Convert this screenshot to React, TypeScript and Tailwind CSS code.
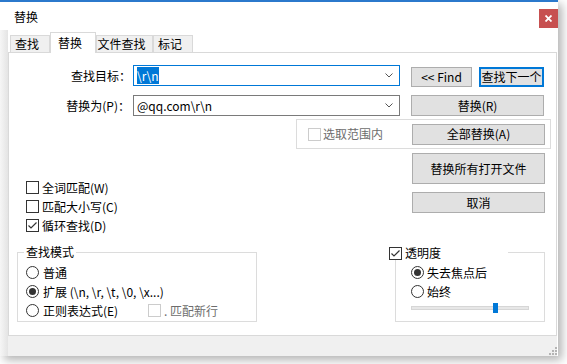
import React from 'react'

const font = "font-['Noto_Sans_CJK_SC','Microsoft_YaHei',sans-serif]"

function CheckBox({ checked = false, disabled = false }: { checked?: boolean; disabled?: boolean }) {
  return (
    <span className={`w-[13px] h-[13px] shrink-0 border bg-white flex items-center justify-center ${disabled ? 'border-[#cccccc]' : 'border-[#333333]'}`}>
      {checked && (
        <svg width="11" height="11" viewBox="0 0 11 11">
          <path d="M1.5 5.5 L4 8 L9.5 2.5" fill="none" stroke="#333333" strokeWidth="1.2" />
        </svg>
      )}
    </span>
  )
}

function Radio({ checked = false }: { checked?: boolean }) {
  return (
    <span className="w-[13px] h-[13px] shrink-0 rounded-full border border-[#333333] bg-white flex items-center justify-center">
      {checked && <span className="w-[7px] h-[7px] rounded-full bg-[#333333]" />}
    </span>
  )
}

function Btn({ children, className = '' }: { children: React.ReactNode; className?: string }) {
  return (
    <div className={`bg-[#e1e1e1] border border-[#adadad] flex items-center justify-center text-[12px] leading-[14px] text-black ${className}`}>
      {children}
    </div>
  )
}

function Combo({ focused, children }: { focused?: boolean; children: React.ReactNode }) {
  return (
    <div className={`w-[267px] h-[21px] bg-white border flex items-center pl-[3px] pr-[6px] ${focused ? 'border-[#0078d7]' : 'border-[#7a7a7a]'}`}>
      <div className="flex-1 text-[12px] leading-[15px] text-black">{children}</div>
      <svg width="8" height="5" viewBox="0 0 8 5">
        <path d="M0.5 0.5 L4 4 L7.5 0.5" fill="none" stroke="#555555" strokeWidth="1" />
      </svg>
    </div>
  )
}

export default function App() {
  const tabs = [
    { label: '查找', w: 'w-[40px]' },
    { label: '替换', w: 'w-[46px]', active: true },
    { label: '文件查找', w: 'w-[57px]' },
    { label: '标记', w: 'w-[40px]' },
  ]

  return (
    <div className={`w-[567px] h-[364px] bg-white ${font}`}>
      <div className="w-[558px] h-[356px] flex flex-col bg-white border-t-2 border-[#2b79cc] shadow-[4px_4px_9px_rgba(0,0,0,0.3)]">
        {/* title bar */}
        <div className="h-[28px] flex items-start justify-between">
          <span className="ml-[14px] mt-[8px] text-[12px] leading-[14px] text-black">替换</span>
          <div className="mt-[7px] w-[19px] h-[19px] bg-[#c75050] flex items-center justify-center">
            <svg width="7" height="7" viewBox="0 0 7 7">
              <path d="M0.5 0.5 L6.5 6.5 M6.5 0.5 L0.5 6.5" stroke="#ffffff" strokeWidth="1.8" />
            </svg>
          </div>
        </div>

        <div className="flex-1 flex">
          <div className="w-[8px] bg-linear-to-r from-[#f6f6f6] to-[#e4e4e4]" />
          <div className="w-[549px] flex flex-col">
            {/* tabs */}
            <div className="h-[22px] flex items-end pl-[2px]">
              {tabs.map(t =>
                t.active ? (
                  <div key={t.label} className={`${t.w} h-[21px] -mb-px relative z-10 bg-white border border-b-0 border-[#d9d9d9] flex items-center justify-center pr-[6px] text-[12px] leading-[14px]`}>
                    {t.label}
                  </div>
                ) : (
                  <div key={t.label} className={`${t.w} h-[17px] bg-[#f0f0f0] border border-b-0 border-[#d9d9d9] flex items-center justify-center pr-[6px] text-[12px] leading-[14px]`}>
                    {t.label}
                  </div>
                )
              )}
            </div>

            {/* panel */}
            <div className="flex-1 border border-[#d9d9d9] bg-white flex flex-col text-[12px] leading-[14px] text-black">
              {/* find row */}
              <div className="mt-[12px] flex items-start">
                <div className="w-[124px] h-[21px] flex items-center justify-end pr-[2px]">查找目标：</div>
                <Combo focused>
                  <span className="bg-[#0078d7] text-white">\r\n</span>
                </Combo>
                <Btn className="ml-[11px] mt-[2px] w-[61px] h-[20px]">&lt;&lt; Find</Btn>
                <div className="ml-[7px] mt-[2px] w-[65px] h-[20px] bg-[#e1e1e1] border-2 border-[#0078d7] flex items-center justify-center">查找下一个</div>
              </div>

              {/* replace row */}
              <div className="mt-[8px] flex items-start">
                <div className="w-[124px] h-[21px] flex items-center justify-end pr-[3px]">替换为(P)：</div>
                <Combo>@qq.com\r\n</Combo>
                <Btn className="ml-[11px] w-[133px] h-[21px]">替换(R)</Btn>
              </div>

              {/* in selection */}
              <div className="mt-[3px] flex">
                <div className="ml-auto mr-[5px] w-[255px] h-[30px] border border-[#dcdcdc] flex items-center pl-[11px]">
                  <CheckBox disabled />
                  <span className="ml-[2px] text-[#6d6d6d]">选取范围内</span>
                  <Btn className="ml-auto mr-[5px] w-[133px] h-[21px]">全部替换(A)</Btn>
                </div>
              </div>

              {/* options + buttons */}
              <div className="mt-[4px] flex items-start">
                <div className="ml-[17px] mt-[25px] flex flex-col">
                  {[
                    { label: '全词匹配(W)', checked: false },
                    { label: '匹配大小写(C)', checked: false },
                    { label: '循环查找(D)', checked: true },
                  ].map(o => (
                    <div key={o.label} className="h-[19px] flex items-center gap-[3px]">
                      <CheckBox checked={o.checked} />
                      <span>{o.label}</span>
                    </div>
                  ))}
                </div>
                <div className="ml-auto mr-[11px] flex flex-col">
                  <Btn className="w-[133px] h-[31px]">替换所有打开文件</Btn>
                  <Btn className="mt-[8px] w-[133px] h-[21px]">取消</Btn>
                </div>
              </div>

              {/* groups */}
              <div className="mt-[17px] flex items-start">
                <div className="relative ml-[8px] w-[240px] h-[70px] border border-[#dcdcdc] pt-[10px] pl-[8px]">
                  <span className="absolute left-[6px] top-[-8px] bg-white px-[2px] leading-[14px]">查找模式</span>
                  <div className="h-[19px] flex items-center gap-[4px]">
                    <Radio />
                    <span>普通</span>
                  </div>
                  <div className="h-[19px] flex items-center gap-[4px]">
                    <Radio checked />
                    <span>扩展 (\n, \r, \t, \0, \x...)</span>
                  </div>
                  <div className="h-[19px] flex items-center">
                    <div className="w-[122px] flex items-center gap-[4px]">
                      <Radio />
                      <span>正则表达式(E)</span>
                    </div>
                    <CheckBox disabled />
                    <span className="ml-[3px] text-[#6d6d6d]">. 匹配新行</span>
                  </div>
                </div>

                <div className="relative ml-[138px] w-[150px] h-[70px] border border-[#dcdcdc] pt-[10px] pl-[15px]">
                  <div className="absolute left-[-7px] top-[-7px] w-[119px] h-[14px] bg-white flex items-center gap-[3px]">
                    <CheckBox checked />
                    <span>透明度</span>
                  </div>
                  <div className="h-[19px] flex items-center gap-[3px]">
                    <Radio checked />
                    <span>失去焦点后</span>
                  </div>
                  <div className="h-[19px] flex items-center gap-[3px]">
                    <Radio />
                    <span>始终</span>
                  </div>
                  <div className="mt-[2px] w-[118px] h-[10px] flex items-center">
                    <div className="w-full h-[4px] bg-[#e7e7e7] border border-[#d6d6d6] flex items-center">
                      <div className="ml-[81px] w-[5px] h-[10px] bg-[#0078d7]" />
                    </div>
                  </div>
                </div>
              </div>
            </div>

            {/* status bar */}
            <div className="h-[20px] bg-[#f0f0f0] flex items-end justify-end pb-[1px]">
              <svg width="8" height="8" viewBox="0 0 8 8">
                <rect x="6" y="0" width="2" height="2" fill="#b4b4b4" />
                <rect x="3" y="3" width="2" height="2" fill="#b4b4b4" />
                <rect x="6" y="3" width="2" height="2" fill="#b4b4b4" />
                <rect x="0" y="6" width="2" height="2" fill="#b4b4b4" />
                <rect x="3" y="6" width="2" height="2" fill="#b4b4b4" />
                <rect x="6" y="6" width="2" height="2" fill="#b4b4b4" />
              </svg>
            </div>
          </div>
        </div>
      </div>
    </div>
  )
}
